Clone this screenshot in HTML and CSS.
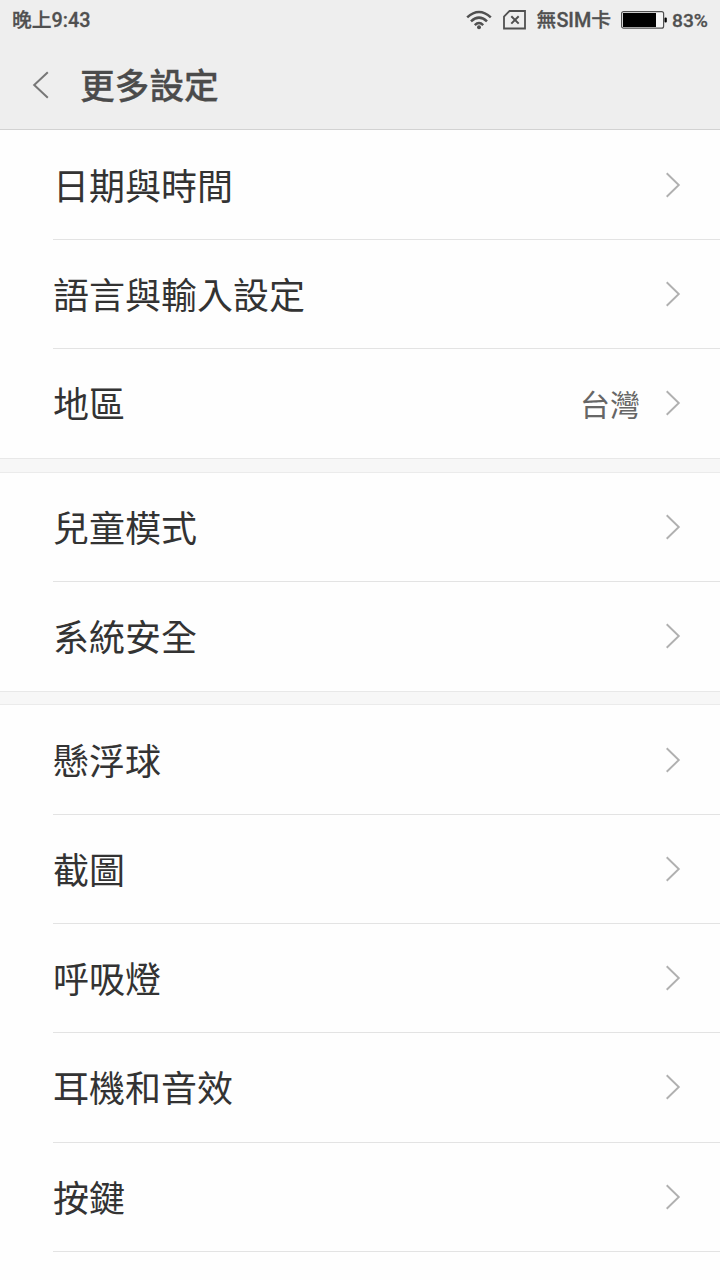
FILE: index.html
```
<!DOCTYPE html>
<html lang="zh-TW">
<head>
  <meta charset="UTF-8">
  <title>更多設定</title>
  <link rel="stylesheet" href="styles.css">
</head>
<body>

  <svg class="defs" width="0" height="0">
    <symbol id="arrow" viewBox="0 0 16 26">
      <path d="M1.7 1.2 L13.8 13 L1.7 24.8" fill="none" stroke="#b0b0b0" stroke-width="1.9"/>
    </symbol>
  </svg>

  <header class="header">
    <div class="status-bar">
      <span class="time">晚上9:43</span>
      <svg class="wifi" width="26" height="20" viewBox="0 0 26 20">
        <g fill="none" stroke="#505050" stroke-width="2.5">
          <path d="M1.2 7.4 Q13 -3.4 24.8 7.4"/>
          <path d="M5 11.4 Q13 3.8 21 11.4"/>
          <path d="M8.8 15.1 Q13 11 17.2 15.1"/>
        </g>
        <circle cx="13" cy="17.2" r="2" fill="#505050"/>
      </svg>
      <svg class="sim" width="24" height="20" viewBox="0 0 24 20">
        <path d="M6.5 1 H22 V18.5 H1 V6.5 Z" fill="none" stroke="#505050" stroke-width="1.8"/>
        <path d="M8.3 6.2 L15.7 13.6 M15.7 6.2 L8.3 13.6" stroke="#505050" stroke-width="2"/>
      </svg>
      <span class="carrier">無SIM卡</span>
      <svg class="battery" width="46" height="18" viewBox="0 0 46 18">
        <rect x="0.6" y="0.6" width="42" height="16.6" rx="2" fill="#f5f5f5" stroke="#505050" stroke-width="1.2"/>
        <rect x="2" y="2" width="33" height="14" fill="#000"/>
        <rect x="43.5" y="6.5" width="2.3" height="5" rx="1" fill="#000"/>
      </svg>
      <span class="percent">83%</span>
    </div>
    <div class="title-bar">
      <svg class="back" width="18" height="28" viewBox="0 0 18 28">
        <path d="M15.8 1.2 L2.2 14 L15.8 26.8" fill="none" stroke="#777" stroke-width="2"/>
      </svg>
      <h1>更多設定</h1>
    </div>
  </header>

  <main>
    <ul class="group">
      <li class="row"><span class="label">日期與時間</span><svg class="arrow"><use href="#arrow"/></svg></li>
      <li class="row"><span class="label">語言與輸入設定</span><svg class="arrow"><use href="#arrow"/></svg></li>
      <li class="row"><span class="label">地區</span><span class="value">台灣</span><svg class="arrow"><use href="#arrow"/></svg></li>
    </ul>
    <div class="gap"></div>
    <ul class="group">
      <li class="row"><span class="label">兒童模式</span><svg class="arrow"><use href="#arrow"/></svg></li>
      <li class="row"><span class="label">系統安全</span><svg class="arrow"><use href="#arrow"/></svg></li>
    </ul>
    <div class="gap"></div>
    <ul class="group">
      <li class="row"><span class="label">懸浮球</span><svg class="arrow"><use href="#arrow"/></svg></li>
      <li class="row"><span class="label">截圖</span><svg class="arrow"><use href="#arrow"/></svg></li>
      <li class="row"><span class="label">呼吸燈</span><svg class="arrow"><use href="#arrow"/></svg></li>
      <li class="row"><span class="label">耳機和音效</span><svg class="arrow"><use href="#arrow"/></svg></li>
      <li class="row line"><span class="label">按鍵</span><svg class="arrow"><use href="#arrow"/></svg></li>
    </ul>
  </main>

</body>
</html>
```

FILE: styles.css
```
* {
  box-sizing: border-box;
}
body {
  margin: 0;
  background-color: #fefefe;
  color: #333;
  font-family: Roboto, "Noto Sans CJK TC", sans-serif;
}
.defs {
  display: none;
}
.header {
  height: 130px;
  background-color: #eee;
  border-bottom: 1px solid #d2d2d2;
}
.status-bar {
  display: flex;
  align-items: center;
  height: 40px;
  padding: 0 12px;
  font-size: 19.8px;
  font-weight: 500;
  line-height: 40px;
  color: #505050;
  -webkit-text-stroke: 0.3px #505050;
}
.time {
  flex: 1;
  padding-top: 1px;
}
.carrier, .percent {
  padding-top: 1px;
}
.percent {
  font-size: 19.2px;
}
.sim {
  margin: 0 10px 0 11px;
}
.battery {
  margin: 0 5px 0 10px;
}
.title-bar {
  display: flex;
  align-items: center;
  height: 89px;
  padding-left: 32px;
}
h1 {
  margin: 0 0 0 30px;
  padding-top: 5px;
  font-size: 34.7px;
  font-weight: 500;
  line-height: 60px;
  color: #4b4b4b;
  -webkit-text-stroke: 0.3px #4b4b4b;
}
main {
  padding-top: 0.6px;
}
.group {
  margin: 0;
  padding: 0;
  list-style: none;
}
.gap {
  height: 14.9px;
  background-color: #f7f7f7;
  border-top: 1px solid #e8e8e8;
  border-bottom: 1px solid #ebebeb;
}
.row {
  display: flex;
  align-items: center;
  height: 109.3px;
  margin-left: 53px;
  padding-right: 39px;
  border-bottom: 1px solid #e3e3e3;
}
.row:last-child:not(.line) {
  height: 108.6px;
  border-bottom: none;
}
.label {
  flex: 1;
  padding-top: 6px;
  font-size: 36px;
  line-height: 54px;
}
.value {
  margin-right: 25px;
  padding-bottom: 1px;
  font-size: 30px;
  color: #666;
}
.arrow {
  width: 16px;
  height: 26px;
}
```
